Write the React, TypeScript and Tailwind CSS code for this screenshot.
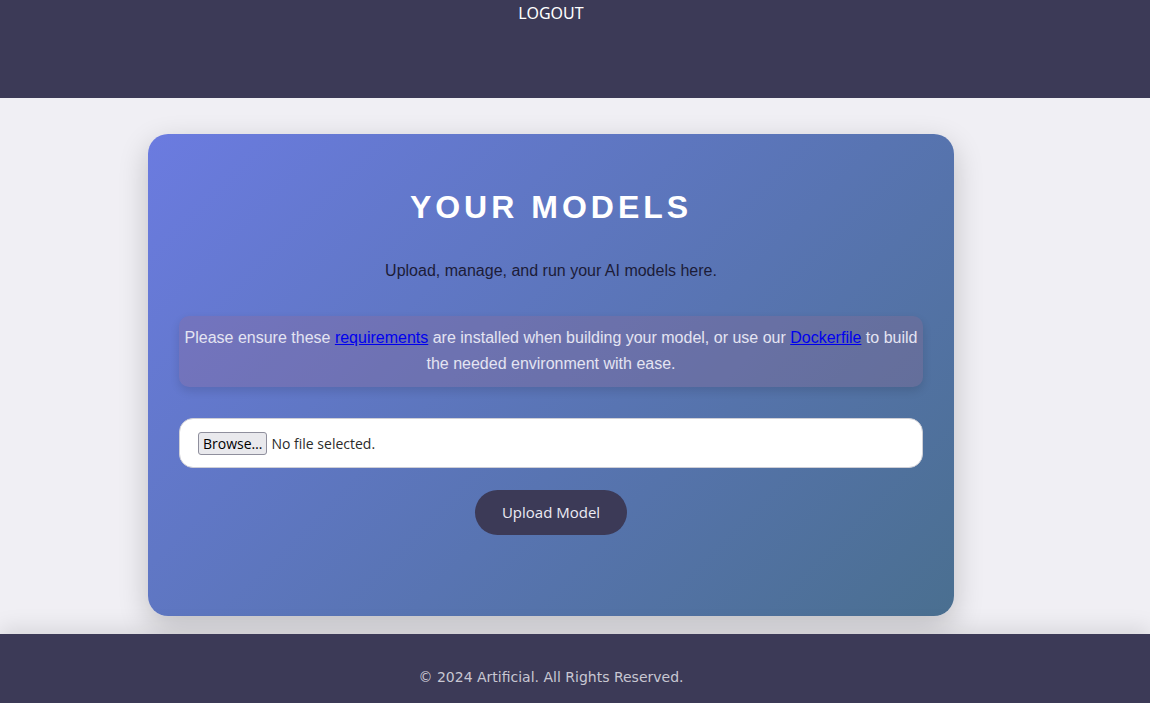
export default function App() {
  return (
    <div className="min-h-screen flex flex-col bg-[#f0eff4]">
      <header className="h-[98px] bg-[#3c3a57] flex justify-center pt-[1px] pr-[48px]">
        <a
          href="#"
          className="h-6 leading-6 text-base text-white uppercase font-['Noto_Sans',sans-serif]"
        >
          Logout
        </a>
      </header>

      <main className="flex-1 flex justify-center pt-[36px] pb-[18px] pr-[48px]">
        <div className="w-[806px] h-[482px] rounded-[20px] bg-[linear-gradient(135deg,#6b7be0,#4a6f90)] shadow-[0_10px_30px_rgba(0,0,0,0.2)] px-[31px] pt-[53px] flex flex-col items-center font-['Liberation_Sans',Arial,sans-serif]">
          <h1 className="h-10 leading-10 text-[32px] font-bold tracking-[4px] text-white">
            YOUR MODELS
          </h1>
          <p className="mt-[32px] h-6 leading-6 text-base text-[#1c1c38]">
            Upload, manage, and run your AI models here.
          </p>

          <div className="mt-[33px] w-full rounded-[10px] bg-[rgba(150,105,140,0.28)] shadow-[0_4px_10px_rgba(0,0,0,0.12)] px-[2px] pt-[9px] pb-[10px] text-center text-base leading-[26px] text-[#e4e4f2]">
            Please ensure these{" "}
            <a href="#" className="text-[#0000ee] underline">
              requirements
            </a>{" "}
            are installed when building your model, or use our{" "}
            <a href="#" className="text-[#0000ee] underline">
              Dockerfile
            </a>{" "}
            to build the needed environment with ease.
          </div>

          <div className="mt-[31px] w-full h-[50px] rounded-[14px] bg-white border border-[#cfcfd6] flex items-center pl-[18px] gap-[4px] font-['Open_Sans',sans-serif] text-[14px]">
            <span className="h-[23px] px-[4px] flex items-center rounded-[3px] bg-[#e9e9ed] border border-[#8f8f9d] text-black">
              Browse…
            </span>
            <span className="text-[#2b2b2b]">No file selected.</span>
          </div>

          <button className="mt-[22px] h-[45px] px-[27px] rounded-full bg-[#3c3a57] text-[#ecebf4] text-[15px] font-['Open_Sans',sans-serif]">
            Upload Model
          </button>
        </div>
      </main>

      <footer className="h-[69px] bg-[#3c3a57] shadow-[0_-6px_20px_rgba(0,0,0,0.1)] pt-[34px] pr-[48px] text-center">
        <p className="h-[18px] leading-[18px] text-sm text-[#c8c7d2] font-['DejaVu_Sans',sans-serif]">
          © 2024 Artificial. All Rights Reserved.
        </p>
      </footer>
    </div>
  );
}
